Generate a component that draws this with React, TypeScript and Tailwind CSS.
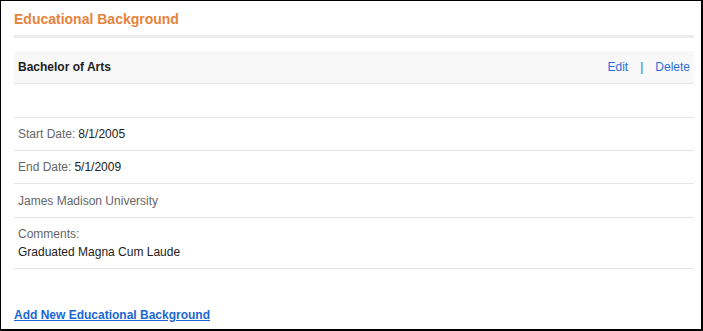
export default function App() {
  const rows = [
    { label: "Start Date:", value: "8/1/2005" },
    { label: "End Date:", value: "5/1/2009" },
  ];

  return (
    <div className="w-[703px] h-[331px] bg-white border-l border-t border-r-2 border-b-2 border-black font-['Liberation_Sans',Arial,sans-serif] flex flex-col pl-[13px] pr-[7px]">
      {/* Section title */}
      <h2 className="text-[14px] font-bold text-[#e8833a] leading-none pt-[11px] pb-[9px]">Educational Background</h2>
      <div className="h-[3px] bg-[#ececec]" />

      <div className="mt-[13px]">
        {/* Degree header */}
        <div className="h-[33px] bg-[#f8f8f8] border-b border-[#e5e5e5] flex items-center justify-between px-[4px]">
          <span className="text-[12px] font-bold text-[#222]">Bachelor of Arts</span>
          <div className="flex items-center text-[12px] text-[#2b6fdc]">
            <a href="#" className="hover:underline">Edit</a>
            <span className="mx-[12px]">|</span>
            <a href="#" className="hover:underline">Delete</a>
          </div>
        </div>

        <div className="h-[34px] border-b border-[#e5e5e5]" />

        {rows.map((r) => (
          <div key={r.label} className="h-[33px] border-b border-[#e5e5e5] flex items-center px-[4px] text-[12px]">
            <span className="text-[#666]">{r.label}</span>
            <span className="text-[#222] ml-[3px]">{r.value}</span>
          </div>
        ))}

        <div className="h-[34px] border-b border-[#e5e5e5] flex items-center px-[4px] text-[12px] text-[#666]">
          James Madison University
        </div>

        <div className="h-[51px] border-b border-[#e5e5e5] flex flex-col justify-center px-[4px] text-[12px] leading-[18px]">
          <span className="text-[#666]">Comments:</span>
          <span className="text-[#222]">Graduated Magna Cum Laude</span>
        </div>
      </div>

      <div className="mt-auto pb-[3px]">
        <a href="#" className="text-[12px] font-bold text-[#1a66d6] underline">Add New Educational Background</a>
      </div>
    </div>
  );
}
